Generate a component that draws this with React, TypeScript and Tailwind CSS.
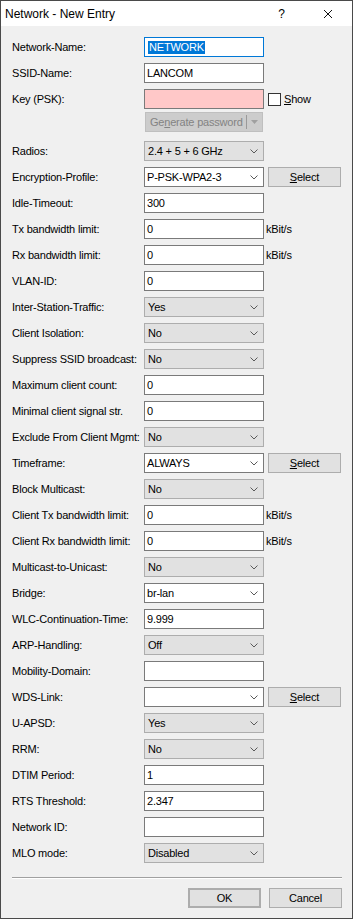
import React from 'react';

type Kind = 'input' | 'combo' | 'edit';

interface Row {
  label: string;
  kind: Kind;
  value?: string;
  extra?: 'select' | 'kbit';
}

const rows: Row[] = [
  { label: 'Radios:', kind: 'combo', value: '2.4 + 5 + 6 GHz' },
  { label: 'Encryption-Profile:', kind: 'edit', value: 'P-PSK-WPA2-3', extra: 'select' },
  { label: 'Idle-Timeout:', kind: 'input', value: '300' },
  { label: 'Tx bandwidth limit:', kind: 'input', value: '0', extra: 'kbit' },
  { label: 'Rx bandwidth limit:', kind: 'input', value: '0', extra: 'kbit' },
  { label: 'VLAN-ID:', kind: 'input', value: '0' },
  { label: 'Inter-Station-Traffic:', kind: 'combo', value: 'Yes' },
  { label: 'Client Isolation:', kind: 'combo', value: 'No' },
  { label: 'Suppress SSID broadcast:', kind: 'combo', value: 'No' },
  { label: 'Maximum client count:', kind: 'input', value: '0' },
  { label: 'Minimal client signal str.', kind: 'input', value: '0' },
  { label: 'Exclude From Client Mgmt:', kind: 'combo', value: 'No' },
  { label: 'Timeframe:', kind: 'edit', value: 'ALWAYS', extra: 'select' },
  { label: 'Block Multicast:', kind: 'combo', value: 'No' },
  { label: 'Client Tx bandwidth limit:', kind: 'input', value: '0', extra: 'kbit' },
  { label: 'Client Rx bandwidth limit:', kind: 'input', value: '0', extra: 'kbit' },
  { label: 'Multicast-to-Unicast:', kind: 'combo', value: 'No' },
  { label: 'Bridge:', kind: 'edit', value: 'br-lan' },
  { label: 'WLC-Continuation-Time:', kind: 'input', value: '9.999' },
  { label: 'ARP-Handling:', kind: 'combo', value: 'Off' },
  { label: 'Mobility-Domain:', kind: 'input', value: '' },
  { label: 'WDS-Link:', kind: 'edit', value: '', extra: 'select' },
  { label: 'U-APSD:', kind: 'combo', value: 'Yes' },
  { label: 'RRM:', kind: 'combo', value: 'No' },
  { label: 'DTIM Period:', kind: 'input', value: '1' },
  { label: 'RTS Threshold:', kind: 'input', value: '2.347' },
  { label: 'Network ID:', kind: 'input', value: '' },
  { label: 'MLO mode:', kind: 'combo', value: 'Disabled' },
];

const Chevron = () => (
  <svg width="8" height="5" viewBox="0 0 8 5" className="ml-auto mr-[5px] shrink-0">
    <polyline points="0.5,0.5 4,4 7.5,0.5" fill="none" stroke="#5a5a5a" strokeWidth="1" />
  </svg>
);

const Label = ({ children }: { children: React.ReactNode }) => (
  <div className="w-[132px] shrink-0 whitespace-nowrap">{children}</div>
);

const Button = ({ children, className = '' }: { children: React.ReactNode; className?: string }) => (
  <div
    className={`w-[73px] h-[20px] flex items-center justify-center bg-[#e1e1e1] border border-[#adadad] ${className}`}
  >
    {children}
  </div>
);

const Control = ({ row }: { row: Row }) => {
  if (row.kind === 'combo') {
    return (
      <div className="w-[120px] h-[20px] flex items-center bg-[#e1e1e1] border border-[#adadad] pl-[3px]">
        <span>{row.value}</span>
        <Chevron />
      </div>
    );
  }
  if (row.kind === 'edit') {
    return (
      <div className="w-[120px] h-[20px] flex items-center bg-white border border-[#7a7a7a] pl-[2px]">
        <span>{row.value}</span>
        <Chevron />
      </div>
    );
  }
  return (
    <div className="w-[120px] h-[20px] flex items-center bg-white border border-[#7a7a7a] pl-[2px]">
      {row.value}
    </div>
  );
};

const App: React.FC = () => {
  return (
    <div className="w-[353px] h-[919px] flex flex-col border border-[#4a4a4a] bg-[#f0f0f0] text-black text-[11px] tracking-[-0.2px] font-['Liberation_Sans',Arial,sans-serif]">
      {/* title bar */}
      <div className="h-[25px] shrink-0 bg-white flex items-center pl-[4px] text-[12px] tracking-normal">
        <span className="flex-1">Network - New Entry</span>
        <span className="mr-[38px]">?</span>
        <svg width="10" height="10" viewBox="0 0 10 10" className="mr-[19px]">
          <path d="M1 1L9 9M9 1L1 9" stroke="#111" strokeWidth="1" />
        </svg>
      </div>

      <div className="flex flex-col gap-[6px] pl-[11px] pt-[11px]">
        <div className="flex items-center h-[20px]">
          <Label>Network-Name:</Label>
          <div className="w-[120px] h-[20px] flex items-center bg-white border border-[#0078d7] pl-[3px]">
            <span className="bg-[#0078d7] text-white leading-[13px] px-[1px]">NETWORK</span>
          </div>
        </div>
        <div className="flex items-center h-[20px]">
          <Label>SSID-Name:</Label>
          <Control row={{ label: '', kind: 'input', value: 'LANCOM' }} />
        </div>
        <div className="flex items-center h-[20px]">
          <Label>Key (PSK):</Label>
          <div className="w-[120px] h-[20px] bg-[#ffc8c8] border border-[#7a7a7a]" />
          <div className="ml-[4px] w-[13px] h-[13px] bg-white border border-[#333]" />
          <span className="ml-[3px]">
            <span className="underline">S</span>how
          </span>
        </div>
        <div className="flex items-center h-[20px] -mt-[3px] mb-[3px]">
          <div className="w-[133px] shrink-0" />
          <div className="w-[118px] h-[20px] flex items-center bg-[#cccccc] border border-[#bfbfbf] text-[#838383] pl-[4px]">
            <span>
              Ge<span className="underline">n</span>erate password
            </span>
            <div className="ml-auto w-px h-[14px] bg-[#9a9a9a]" />
            <svg width="7" height="4" viewBox="0 0 7 4" className="mx-[4px]">
              <polygon points="0,0 7,0 3.5,4" fill="#a0a0a0" />
            </svg>
          </div>
        </div>

        {rows.map((row) => (
          <div key={row.label} className="flex items-center h-[20px]">
            <Label>{row.label}</Label>
            <Control row={row} />
            {row.extra === 'select' && (
              <Button className="ml-[4px]">
                <span>
                  <span className="underline">S</span>elect
                </span>
              </Button>
            )}
            {row.extra === 'kbit' && <span className="ml-[2px]">kBit/s</span>}
          </div>
        ))}
      </div>

      {/* footer */}
      <div className="mt-[14px] ml-[11px] mr-[10px] h-[2px] border-t border-[#a0a0a0] border-b border-b-white" />
      <div className="mt-[9px] flex justify-end gap-[8px] mr-[10px]">
        <Button className="border-2 border-[#0078d7]">OK</Button>
        <Button>Cancel</Button>
      </div>
    </div>
  );
};

export default App;
